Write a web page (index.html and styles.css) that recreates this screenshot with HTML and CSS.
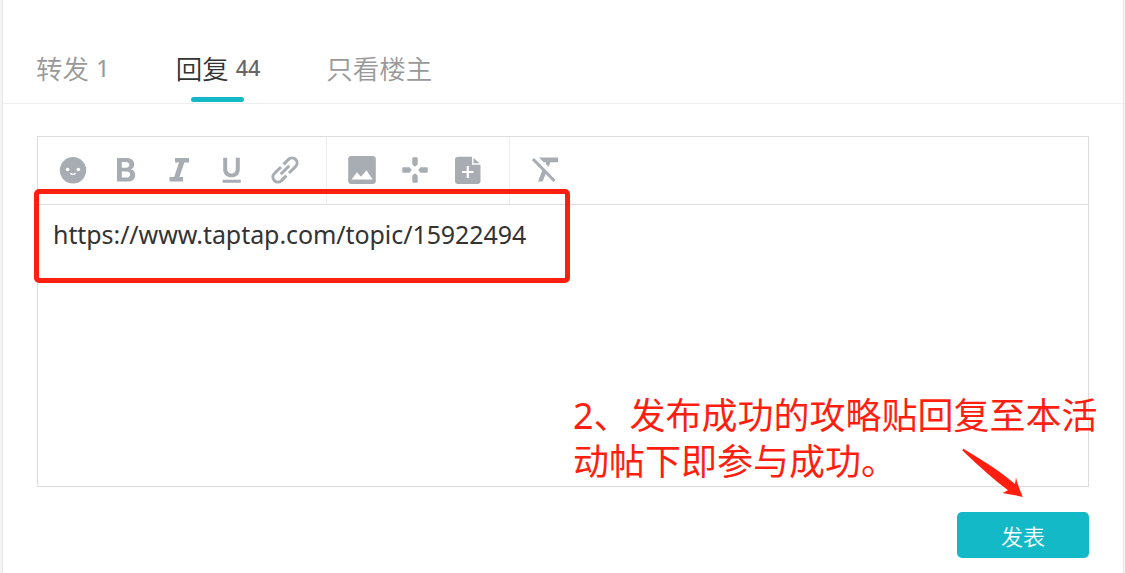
FILE: index.html
```
<!DOCTYPE html>
<html lang="zh-CN">

<head>
    <meta charset="UTF-8">
    <title>回复</title>
    <meta name="viewport" content="width=device-width, initial-scale=1">
    <link rel="stylesheet" href="styles.css">
</head>

<body>
    <main class="page">
        <nav class="tabs">
            <a class="tab">转发 <span class="count">1</span></a>
            <a class="tab active">回复 <span class="count">44</span></a>
            <a class="tab">只看楼主</a>
        </nav>

        <section class="reply">
            <div class="editor">
                <div class="toolbar">
                    <div class="group">
                        <button class="tool" aria-label="表情">
                            <svg viewBox="0 0 28 28"><circle cx="14" cy="14.3" r="13.2"/><g class="cut"><circle cx="8.6" cy="13.5" r="1.8"/><circle cx="19.4" cy="13.5" r="1.8"/></g><path class="smile" d="M11.6 16.800c.3 2.200 4.500 2.200 4.800 0"/></svg>
                        </button>
                        <button class="tool" aria-label="粗体">
                            <svg viewBox="0 0 28 28"><path fill-rule="evenodd" d="M5 2h9.500c4.800 0 7.700 2.400 7.700 6.300 0 2.500-1.200 4.200-3.100 5.100 2.700.8 4.100 2.800 4.100 5.500 0 4.300-3 6.700-8 6.700H5zM9.800 6v5.700h4.100c2.200 0 3.400-1 3.400-2.900S16.100 6 13.900 6zM9.800 15.500v6.100h4.700c2.400 0 3.600-1.100 3.600-3.100s-1.200-3-3.600-3z"/></svg>
                        </button>
                        <button class="tool" aria-label="斜体">
                            <svg viewBox="0 0 28 28"><path d="M10 2h14v4.500h-4.600l-5 14.500H18v4.500H4.500V21h4.600l5-14.500H10z"/></svg>
                        </button>
                        <button class="tool" aria-label="下划线">
                            <svg viewBox="0 0 28 28"><path d="M5.200 1.700h4v11c0 3.200 1.600 4.800 4.300 4.800s4.300-1.600 4.300-4.800v-11h4v11.200c0 5.300-3.200 8.300-8.300 8.300s-8.300-3-8.300-8.300zM4.600 23.700h18.200v3H4.600z"/></svg>
                        </button>
                        <button class="tool" aria-label="链接">
                            <svg viewBox="0 0 28 28"><g class="chain" transform="rotate(-45 14 14)"><path d="M13.300 9H4a5 5 0 0 0 0 10h7M14.700 19H24a5 5 0 0 0 0-10h-7M8 14h12"/></g></svg>
                        </button>
                    </div>
                    <div class="group">
                        <button class="tool" aria-label="图片">
                            <svg viewBox="0 0 28 28"><rect x=".2" y="0" width="27.600" height="28" rx="3"/><path class="cut" d="M3.500 23.500 9 16.200l4 4.600 5.400-6.600 6.300 9.300z"/></svg>
                        </button>
                        <button class="tool" aria-label="插入">
                            <svg viewBox="0 0 28 28"><path d="M11.300 2.300a1 1 0 0 1 1-1h3.400a1 1 0 0 1 1 1V8.500L14 10.800l-2.700-2.300zM11.300 25.700a1 1 0 0 0 1 1h3.400a1 1 0 0 0 1-1v-6.200L14 17.200l-2.700 2.300zM2.300 11.300a1 1 0 0 0-1 1v3.400a1 1 0 0 0 1 1h6.200l2.300-2.700-2.300-2.700zM25.700 11.300a1 1 0 0 1 1 1v3.400a1 1 0 0 1-1 1h-6.200L17.200 14l2.300-2.700z"/></svg>
                        </button>
                        <button class="tool" aria-label="附件">
                            <svg viewBox="0 0 28 28"><path d="M4 .8h14v7.900h8.500V25a3 3 0 0 1-3 3H4a3 3 0 0 1-3-3V3.800a3 3 0 0 1 3-3zM19.500 2l6 5.300h-6z"/><path class="cut" d="M12.700 10h2.200v5h4.600v2.100h-4.600v5h-2.200v-5H8V15h4.700z"/></svg>
                        </button>
                    </div>
                    <div class="group">
                        <button class="tool" aria-label="清除格式">
                            <svg viewBox="0 0 28 28"><path d="M8 1.500h19v4.700h-7.500l-1.900 4.600-3.100-3.100.6-1.500h-2.400zM12.100 12.300l3.500 3.500-4 9.700H7z"/><path class="slash" d="m2 3 21.500 22"/></svg>
                        </button>
                    </div>
                </div>
                <div class="content" contenteditable="true" spellcheck="false">https://www.taptap.com/topic/15922494</div>

                <div class="highlight"></div>
                <p class="note">2、发布成功的攻略贴回复至本活<br>动帖下即参与成功。</p>
                <svg class="arrow" viewBox="0 0 64 52"><path d="M2.500.800C17 10 34 19 54 36l1-6.800c1.200 7 4.500 13.800 6.800 19.800-7-2-13.500-2.500-20.300-4l5.500-2.800C33 31.500 17 17.500 1.300 2.200z"/></svg>
            </div>
            <button class="submit">发表</button>
        </section>
    </main>
</body>

</html>
```

FILE: styles.css
```
* {
    box-sizing: border-box;
}

body {
    margin: 0;
    padding: 0 1px 0 2px;
    height: 573px;
    overflow: hidden;
    background-color: #f5f5f5;
    font-family: "Noto Sans", "Noto Sans CJK SC", sans-serif;
    color: #333;
}

.page {
    height: 573px;
    background-color: #fff;
    border-left: 1px solid #e6e6e6;
    border-right: 1px solid #e6e6e6;
}

.tabs {
    display: flex;
    height: 104px;
    padding: 36px 33px 0;
    gap: 66px;
    border-bottom: 1px solid #eee;
}

.tab {
    display: flex;
    gap: 7px;
    position: relative;
    height: 67px;
    font-family: "Noto Sans CJK SC", sans-serif;
    font-size: 26.5px;
    font-weight: 350;
    line-height: 64px;
    white-space: nowrap;
    color: #999;
}

.tab .count {
    font-family: "Noto Sans", sans-serif;
    font-size: 24px;
    font-weight: 400;
}

.tab.active {
    color: #333;
}

.tab.active .count {
    font-size: 21.5px;
    font-weight: 500;
    color: #666;
}

.tab.active::after {
    content: "";
    position: absolute;
    left: calc(50% - 27px);
    bottom: 1px;
    width: 53px;
    height: 5px;
    border-radius: 3px;
    background-color: #14b9c8;
}

.reply {
    display: flex;
    flex-direction: column;
    padding: 32px 34px 0;
}

.editor {
    position: relative;
    height: 351px;
    border: 1px solid #ddd;
}

.toolbar {
    display: flex;
    height: 68px;
    border-bottom: 1px solid #ddd;
}

.group {
    display: flex;
    padding: 0 15px 0 8px;
    border-right: 1px solid #eee;
}

.group:last-child {
    border-right: none;
}

.tool {
    display: flex;
    align-items: center;
    justify-content: center;
    width: 53px;
    height: 66px;
    padding: 0;
    border: none;
    background: none;
    cursor: pointer;
}

.tool svg {
    width: 28px;
    height: 28px;
    fill: #a8adb3;
}

.tool .cut {
    fill: #fff;
}

.tool .smile {
    fill: none;
    stroke: #fff;
    stroke-width: 1.3;
}

.tool .chain {
    fill: none;
    stroke: #a8adb3;
    stroke-width: 3;
}

.tool .slash {
    fill: none;
    stroke: #a8adb3;
    stroke-width: 3;
}

.content {
    padding: 11px 15px;
    font-size: 25px;
    letter-spacing: -0.07px;
    line-height: 36px;
    outline: none;
}

.submit {
    align-self: flex-end;
    width: 132px;
    height: 46px;
    margin-top: 25px;
    padding: 0;
    border: none;
    border-radius: 5px;
    background-color: #14b9c8;
    font-family: "Noto Sans CJK SC", sans-serif;
    font-size: 22px;
    font-weight: 350;
    color: #fff;
    cursor: pointer;
}

/* Marks drawn over the editor */

.highlight {
    position: absolute;
    left: -4px;
    top: 52px;
    width: 536px;
    height: 94px;
    border: 5px solid #ff1f11;
    border-radius: 5px;
    pointer-events: none;
}

.note {
    position: absolute;
    left: 535px;
    top: 256px;
    margin: 0;
    font-family: "Noto Sans", "Noto Sans CJK SC", sans-serif;
    font-size: 36px;
    line-height: 46px;
    white-space: nowrap;
    color: #ff1f11;
    pointer-events: none;
}

.arrow {
    position: absolute;
    left: 923px;
    top: 311px;
    width: 64px;
    height: 52px;
    fill: #ff1f11;
    pointer-events: none;
}
```
